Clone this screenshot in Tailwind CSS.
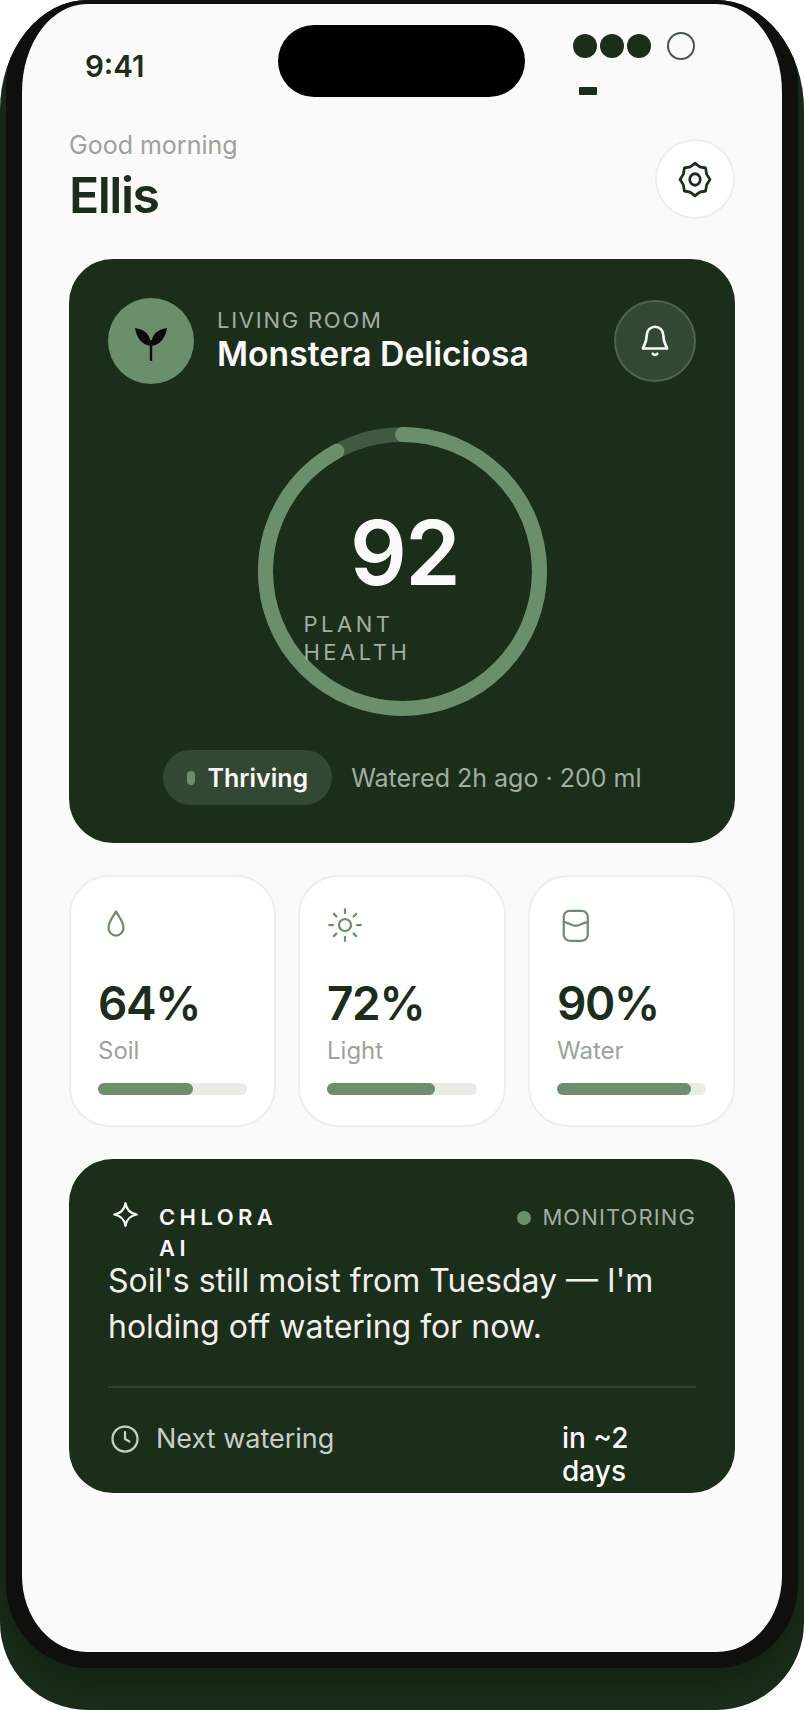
<!DOCTYPE html>
<html lang="en">
<head>
    <meta charset="UTF-8">
    <meta name="viewport" content="width=device-width, initial-scale=1.0">
    <title>Chlora - Plant Health</title>
    <script src="https://cdn.jsdelivr.net/npm/@tailwindcss/browser@4"></script>
</head>
<body class="bg-white font-['Inter',sans-serif]">
    <div class="flex flex-col w-[804px] h-[1710px] px-[6px] rounded-[88px/110px_110px_88px_88px] bg-[#1a2e1a] overflow-hidden">
        <div class="-mt-3 h-[1680px] p-4 rounded-[82px/100px_100px_84px_84px] bg-[#0f0f0c] shadow-[0_14px_50px_rgba(0,0,0,0.3)]">
            <div class="h-[1648px] px-[47px] rounded-[65px/88px_88px_76px_76px] bg-[#fafaf8] overflow-hidden">

                <!-- status bar -->
                <div class="flex items-start pt-[21px]">
                    <span class="w-[193px] ml-4 mt-[22px] text-[29.500px] leading-[38px] font-semibold text-[#1a2e1a]">9:41</span>
                    <div class="w-[247px] h-[72px] rounded-full bg-black"></div>
                    <div class="flex flex-wrap items-center w-[130px] ml-[48px] mt-[7px]">
                        <span class="w-6 h-6 rounded-full bg-[#1a2e1a]"></span>
                        <span class="w-6 h-6 ml-[3px] rounded-full bg-[#1a2e1a]"></span>
                        <span class="w-6 h-6 ml-[3px] rounded-full bg-[#1a2e1a]"></span>
                        <span class="w-7 h-7 ml-4 rounded-full border-2 border-[#1a2e1a]/80"></span>
                        <span class="w-[18px] h-2 ml-[6px] mt-[27px] rounded-[1px] bg-[#1a2e1a]"></span>
                    </div>
                </div>

                <!-- greeting -->
                <div class="flex items-start justify-between -mt-[1px]">
                    <div>
                        <p class="mt-[32px] text-[25px] leading-[34px] text-[#9ca39a]">Good morning</p>
                        <h1 class="mt-[5px] text-[50px] leading-[56px] font-semibold tracking-[-0.03em] text-[#1a2e1a]">Ellis</h1>
                    </div>
                    <button class="flex items-center justify-center w-20 h-20 mt-[43px] rounded-full bg-white border-2 border-[#eeeeea]">
                        <svg class="w-9 h-[39px]" viewBox="0 0 24 24" preserveAspectRatio="none" fill="none" stroke="#1a2e1a" stroke-width="1.800" stroke-linejoin="round">
                            <path d="M12 2L15.210 4.240L19.070 4.930L19.760 8.790L22 12L19.760 15.210L19.070 19.070L15.210 19.760L12 22L8.790 19.760L4.930 19.070L4.240 15.210L2 12L4.240 8.790L4.930 4.930L8.790 4.240Z"/>
                            <circle cx="12" cy="12" r="3.500"/>
                        </svg>
                    </button>
                </div>

                <!-- plant card -->
                <div class="mt-[36px] pt-[39px] pb-[38px] px-[39px] rounded-[44px] bg-[#1a2e1a]">
                    <div class="flex items-center justify-between">
                        <div class="flex items-center gap-[23px]">
                            <div class="flex items-center justify-center w-[86px] h-[86px] rounded-full bg-[#6b8f6b]">
                                <svg class="w-9 h-9 mt-1" viewBox="0 0 36 36" fill="#0a0a0a">
                                    <path d="M16.800 15h2.400v21h-2.400z"/>
                                    <path d="M17.800 21C9 20 3.500 13 2 3c7 1 12.500 4 14.800 10.500z"/>
                                    <path d="M18.200 21C27 20 32.500 13 34 3c-7 1-12.500 4-14.800 10.500z"/>
                                </svg>
                            </div>
                            <div class="pb-1">
                                <p class="text-[22px] leading-[29px] tracking-[0.08em] text-[#a3ada2]">LIVING ROOM</p>
                                <p class="text-[33.700px] leading-[38px] font-semibold text-[#fafaf8]">Monstera Deliciosa</p>
                            </div>
                        </div>
                        <button class="flex items-center justify-center w-[82px] h-[82px] rounded-full bg-[#334833] border-2 border-[#4f634f]">
                            <svg class="w-9 h-9" viewBox="0 0 24 24" fill="none" stroke="#fafaf8" stroke-width="1.800" stroke-linecap="round" stroke-linejoin="round">
                                <path d="M6.500 8a5.500 5.500 0 0 1 11 0c0 6 2.500 7.500 2.500 9H4c0-1.500 2.500-3 2.500-9"/>
                                <path d="M10.500 20.500a1.800 1.800 0 0 0 3 0"/>
                            </svg>
                        </button>
                    </div>

                    <div class="relative w-[289px] h-[289px] mx-auto mt-[43px]">
                        <svg class="w-[289px] h-[289px] -rotate-90" viewBox="0 0 289 289" fill="none">
                            <circle cx="144.500" cy="144.500" r="137" stroke="#3f5a40" stroke-width="15"/>
                            <circle cx="144.500" cy="144.500" r="137" stroke="#6b8f6b" stroke-width="15" stroke-linecap="round" stroke-dasharray="792 861"/>
                        </svg>
                        <div class="absolute inset-0 flex flex-col items-start">
                            <span class="self-center ml-[5px] mt-[72px] text-[89px] leading-[108px] font-semibold tracking-[-0.02em] text-[#fafaf8]">92</span>
                            <span class="w-[125px] ml-[46px] mt-[3px] text-[22px] leading-[28px] tracking-[0.16em] text-[#a3ada2]">PLANT HEALTH</span>
                        </div>
                    </div>

                    <div class="flex items-center justify-center gap-[19px] mt-[34px]">
                        <div class="flex items-center h-[55px] pl-6 pr-6 rounded-full bg-[#334833]">
                            <span class="w-2 h-[14px] mr-[13px] rounded-full bg-[#6b8f6b]"></span>
                            <span class="mt-[2px] text-[25px] font-semibold text-[#fafaf8]">Thriving</span>
                        </div>
                        <span class="mt-[2px] text-[25px] text-[#a3ada2]">Watered 2h ago · 200 ml</span>
                    </div>
                </div>

                <!-- metrics -->
                <div class="grid grid-cols-[207px_208px_207px] gap-[22px] mt-[32px]">
                    <div class="h-[252px] pt-[30px] px-[27px] rounded-[40px] bg-white border-2 border-[#eeeeea]">
                        <svg class="w-9 h-9 mb-[32px]" viewBox="0 0 24 24" fill="none" stroke="#6b8f6b" stroke-width="1.500" stroke-linecap="round" stroke-linejoin="round">
                            <path d="M12 3c-1.500 3-5 6.500-5 11a5 5 0 0 0 10 0c0-4.500-3.500-8-5-11z"/>
                        </svg>
                        <p class="text-[46px] leading-[56px] font-semibold tracking-[-0.03em] text-[#1a2e1a]">64%</p>
                        <p class="mt-[4px] text-[24px] leading-[32px] text-[#9ca39a]">Soil</p>
                        <div class="h-3 mt-[16px] rounded-full bg-[#eaeae6]"><div class="h-3 rounded-full bg-[#6b8f6b]" style="width:64%"></div></div>
                    </div>
                    <div class="h-[252px] pt-[30px] px-[27px] rounded-[40px] bg-white border-2 border-[#eeeeea]">
                        <svg class="w-9 h-9 mb-[32px]" viewBox="0 0 24 24" fill="none" stroke="#6b8f6b" stroke-width="1.500" stroke-linecap="round">
                            <circle cx="12" cy="12" r="4"/>
                            <path d="M12 1.500v2.500M12 20v2.500M1.500 12H4M20 12h2.500M4.600 4.600l1.700 1.700M17.700 17.700l1.700 1.700M4.600 19.400l1.700-1.700M17.700 6.300l1.700-1.700"/>
                        </svg>
                        <p class="text-[46px] leading-[56px] font-semibold tracking-[-0.03em] text-[#1a2e1a]">72%</p>
                        <p class="mt-[4px] text-[24px] leading-[32px] text-[#9ca39a]">Light</p>
                        <div class="h-3 mt-[16px] rounded-full bg-[#eaeae6]"><div class="h-3 rounded-full bg-[#6b8f6b]" style="width:72%"></div></div>
                    </div>
                    <div class="h-[252px] pt-[30px] px-[27px] rounded-[40px] bg-white border-2 border-[#eeeeea]">
                        <svg class="w-9 h-9 mb-[32px]" viewBox="0 0 24 24" fill="none" stroke="#6b8f6b" stroke-width="1.500" stroke-linecap="round" stroke-linejoin="round">
                            <rect x="4.500" y="2.500" width="16" height="20" rx="4"/>
                            <path d="M4.500 10c3 0 4.500 2.500 8 2.500s5-2.500 8-2.500"/>
                        </svg>
                        <p class="text-[46px] leading-[56px] font-semibold tracking-[-0.03em] text-[#1a2e1a]">90%</p>
                        <p class="mt-[4px] text-[24px] leading-[32px] text-[#9ca39a]">Water</p>
                        <div class="h-3 mt-[16px] rounded-full bg-[#eaeae6]"><div class="h-3 rounded-full bg-[#6b8f6b]" style="width:90%"></div></div>
                    </div>
                </div>

                <!-- ai card -->
                <div class="h-[334px] mt-[32px] pt-[43px] px-[39px] rounded-[44px] bg-[#1a2e1a] overflow-hidden">
                    <div class="flex items-start justify-between">
                        <div class="flex items-start gap-[20px] pl-[4px]">
                            <svg class="w-[27px] h-[27px] -mt-[1px]" viewBox="0 0 24 24" fill="none" stroke="#fafaf8" stroke-width="2" stroke-linejoin="round">
                                <path d="M12 2c1 6 4 9 10 10-6 1-9 4-10 10-1-6-4-9-10-10 6-1 9-4 10-10z"/>
                            </svg>
                            <span class="w-[130px] text-[22px] leading-[31px] font-semibold tracking-[0.2em] text-[#fafaf8]">CHLORA AI</span>
                        </div>
                        <div class="flex items-center gap-[11px]">
                            <span class="w-[14px] h-[14px] rounded-full bg-[#6b8f6b]"></span>
                            <span class="text-[22px] leading-[31px] tracking-[0.05em] text-[#a3ada2]">MONITORING</span>
                        </div>
                    </div>
                    <p class="-mt-[6px] text-[32px] leading-[46px] text-[#f0f0ec]">Soil's still moist from Tuesday — I'm holding off watering for now.</p>
                    <div class="h-[2px] mt-[36px] bg-[#304330]"></div>
                    <div class="flex items-start justify-between mt-[34px]">
                        <div class="flex items-center gap-[16px] pl-[2px]">
                            <svg class="w-[30px] h-[30px]" viewBox="0 0 24 24" fill="none" stroke="#c8cec6" stroke-width="1.800" stroke-linecap="round" stroke-linejoin="round">
                                <circle cx="12" cy="12" r="10"/>
                                <path d="M12 6.500V12l3.500 2"/>
                            </svg>
                            <span class="text-[27px] leading-[34px] text-[#c8cec6]">Next watering</span>
                        </div>
                        <span class="w-[134px] text-[28px] leading-[33px] font-medium text-[#fafaf8]">in ~2 days</span>
                    </div>
                </div>

            </div>
        </div>
    </div>
</body>
</html>
